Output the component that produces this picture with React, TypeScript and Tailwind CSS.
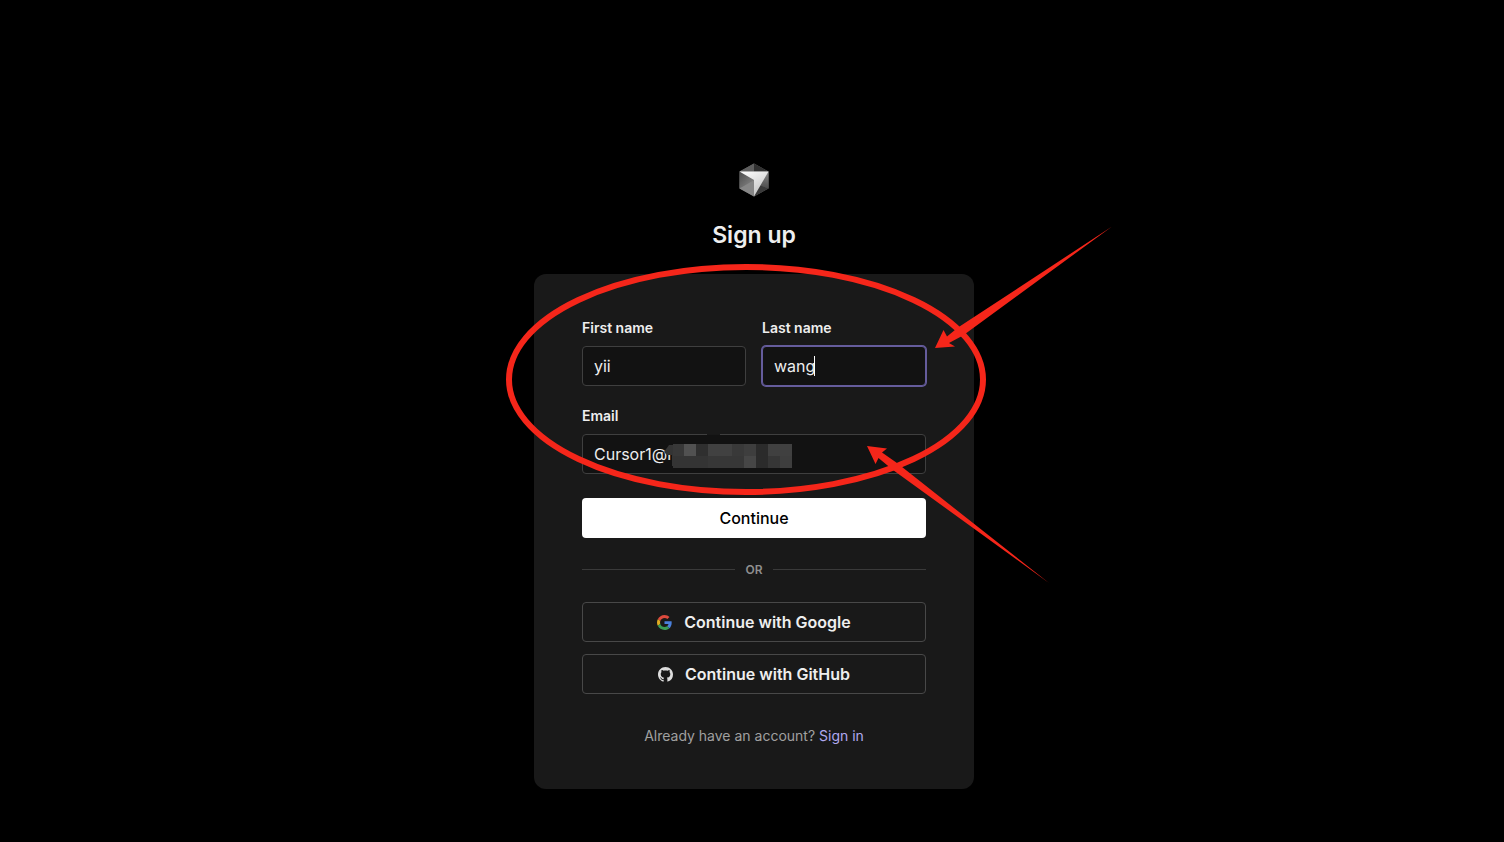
import React from "react";

const mosaic: [number, number, number, number, string][] = [
  [10, 0, 11, 12, "#383838"],
  [21, 0, 12, 12, "#515151"],
  [33, 0, 12, 12, "#2f2f2f"],
  [45, 0, 24, 12, "#414141"],
  [69, 0, 12, 12, "#393939"],
  [81, 0, 12, 12, "#3e3e3e"],
  [93, 0, 12, 12, "#2b2b2b"],
  [105, 0, 24, 12, "#404040"],
  [10, 12, 35, 12, "#343434"],
  [45, 12, 36, 12, "#373737"],
  [81, 12, 12, 12, "#464646"],
  [93, 12, 12, 12, "#2b2b2b"],
  [105, 12, 12, 12, "#363636"],
  [117, 12, 12, 12, "#3e3e3e"],
];

function Logo() {
  return (
    <svg viewBox="0 0 30 34" className="h-[34px] w-[30px]" role="img" aria-label="Cursor">
      <defs>
        <linearGradient id="face" x1="0" y1="0" x2="0.6" y2="1">
          <stop offset="0" stopColor="#ffffff" />
          <stop offset="1" stopColor="#c4c4c4" />
        </linearGradient>
        <linearGradient id="left" x1="0" y1="0" x2="1" y2="1">
          <stop offset="0" stopColor="#4c4c4c" />
          <stop offset="1" stopColor="#8c8c8c" />
        </linearGradient>
        <linearGradient id="right" x1="0" y1="0" x2="0" y2="1">
          <stop offset="0" stopColor="#8a8a8a" />
          <stop offset="1" stopColor="#4c4c4c" />
        </linearGradient>
      </defs>
      <path d="M15 0.5 29.5 8.5V25.5L15 33.5 0.5 25.5V8.5Z" fill="#6d6d6d" />
      <path d="M15 0.5 0.5 8.5H15Z" fill="#5e5e5e" />
      <path d="M15 0.5 29.5 8.5H15Z" fill="#303030" />
      <path d="M0.5 8.5V25.5L15 17Z" fill="url(#left)" />
      <path d="M0.5 25.5 15 17V33.5Z" fill="#878787" />
      <path d="M29.5 8.5V25.5L20 22Z" fill="url(#right)" />
      <path d="M29.5 25.5 15 33.5 20 22Z" fill="#3a3a3a" />
      <path d="M0.5 8.5H29.5L15 33.5V17Z" fill="url(#face)" />
    </svg>
  );
}

function GoogleIcon() {
  return (
    <svg viewBox="0 0 48 48" className="size-[15px]" aria-hidden="true">
      <path fill="#dc4a3d" d="M24 9.5c3.54 0 6.71 1.22 9.21 3.6l6.85-6.85C35.9 2.38 30.47 0 24 0 14.62 0 6.51 5.38 2.56 13.22l7.98 6.19C12.43 13.72 17.74 9.5 24 9.5z" />
      <path fill="#4a80dc" d="M46.98 24.55c0-1.57-.15-3.09-.38-4.55H24v9.02h12.94c-.58 2.96-2.26 5.48-4.78 7.18l7.73 6c4.51-4.18 7.09-10.36 7.09-17.65z" />
      <path fill="#e0ac20" d="M10.53 28.59c-.48-1.45-.76-2.99-.76-4.59s.27-3.14.76-4.59l-7.98-6.19C.92 16.46 0 20.12 0 24c0 3.88.92 7.54 2.56 10.78l7.97-6.19z" />
      <path fill="#3a9c55" d="M24 48c6.48 0 11.93-2.13 15.89-5.81l-7.73-6c-2.15 1.45-4.92 2.3-8.16 2.3-6.26 0-11.57-4.22-13.47-9.91l-7.98 6.19C6.51 42.62 14.62 48 24 48z" />
    </svg>
  );
}

function GitHubIcon() {
  return (
    <svg viewBox="0 0 16 16" className="size-[15px]" fill="#dddddd" aria-hidden="true">
      <path d="M8 0C3.58 0 0 3.58 0 8c0 3.54 2.29 6.53 5.47 7.59.4.07.55-.17.55-.38 0-.19-.01-.82-.01-1.49-2.01.37-2.53-.49-2.69-.94-.09-.23-.48-.94-.82-1.13-.28-.15-.68-.52-.01-.53.63-.01 1.08.58 1.23.82.72 1.21 1.87.87 2.33.66.07-.52.28-.87.51-1.07-1.78-.2-3.64-.89-3.64-3.95 0-.87.31-1.59.82-2.15-.08-.2-.36-1.02.08-2.12 0 0 .67-.21 2.2.82.64-.18 1.32-.27 2-.27s1.36.09 2 .27c1.53-1.04 2.2-.82 2.2-.82.44 1.1.16 1.92.08 2.12.51.56.82 1.27.82 2.15 0 3.07-1.87 3.75-3.65 3.95.29.25.54.73.54 1.48 0 1.07-.01 1.93-.01 2.2 0 .21.15.46.55.38A8.01 8.01 0 0 0 16 8c0-4.42-3.58-8-8-8Z" />
    </svg>
  );
}

function Annotations() {
  return (
    <svg
      viewBox="500 220 620 370"
      className="pointer-events-none absolute -left-[34px] -top-[54px] h-[370px] w-[620px] max-w-none"
      aria-hidden="true"
    >
      <ellipse cx="746" cy="379.5" rx="237" ry="112.5" fill="none" stroke="#f5261a" strokeWidth="6" />
      <path d="M935 348 943.5 330 947 336.5 958 327.5 1112 226.5 963 335.5 949 343 955 346.5Z" fill="#f5261a" />
      <path d="M867 446 887 448.5 882 452.5 897 463 1049 583 893 470 878.5 458 875.5 464Z" fill="#f5261a" />
    </svg>
  );
}

const field =
  "h-10 w-full rounded border border-[#3f3f3f] bg-[#121212] px-[11px] text-base text-[#eeeeee] outline-none";
const providerButton =
  "flex h-10 w-full items-center justify-center gap-3 rounded border border-[#484848] text-base font-semibold text-[#eeeeee]";
const label = "mb-2 block text-sm font-semibold text-[#eeeeee]";

export default function App() {
  return (
    <main className="flex min-h-screen flex-col items-center bg-black pb-13 pl-1 pt-[163px] font-['Inter',sans-serif]">
      <Logo />
      <h1 className="mt-[22px] text-[23px] leading-8 font-semibold text-[#eeeeee]">Sign up</h1>
      <section className="relative mt-[23px] w-full max-w-[440px] rounded-xl bg-[#191919] px-12 pb-[43px] pt-11">
        <form onSubmit={(e) => e.preventDefault()}>
          <div className="grid grid-cols-2 gap-4">
            <div>
              <label htmlFor="first" className={label}>First name</label>
              <input id="first" defaultValue="yii" className={field} />
            </div>
            <div>
              <label htmlFor="last" className={label}>Last name</label>
              <div className="relative">
                <input
                  id="last"
                  defaultValue="wang"
                  className="h-10 w-full rounded border border-[#655c9c] bg-[#121212] px-[11px] text-base text-[#eeeeee] outline-none ring-1 ring-[#655c9c]"
                />
                <span className="absolute left-[52px] top-[10px] h-5 w-px bg-white" />
              </div>
            </div>
          </div>
          <div className="mt-5">
            <label htmlFor="email" className={label}>Email</label>
            <div className="relative">
              <input id="email" defaultValue="Cursor1@r" className={field} />
              <svg
                viewBox="0 -10 130 34"
                className="absolute left-[81px] top-0 h-[34px] w-[130px]"
                aria-hidden="true"
              >
                <path d="M44 -10H57V-9H44Z" fill="#181818" />
                <path d="M1 8 6 1H10V22H9V11H4Z" fill="#343434" />
                {mosaic.map(([x, y, w, h, c]) => (
                  <rect key={`${x}-${y}`} x={x} y={y} width={w} height={h} fill={c} />
                ))}
              </svg>
            </div>
          </div>
          <button type="submit" className="mt-6 h-10 w-full rounded bg-white text-base font-medium text-black">
            Continue
          </button>
        </form>
        <div className="my-6 flex items-center gap-[10px] text-xs font-semibold text-[#8f8f8f]">
          <span className="mb-px h-px flex-1 bg-[#3a3a3a]" />
          OR
          <span className="mb-px h-px flex-1 bg-[#3a3a3a]" />
        </div>
        <div className="flex flex-col gap-3">
          <button type="button" className={providerButton}>
            <GoogleIcon />
            Continue with Google
          </button>
          <button type="button" className={providerButton}>
            <GitHubIcon />
            Continue with GitHub
          </button>
        </div>
        <p className="mt-8 text-center text-sm text-[#a0a0a0]">
          Already have an account?{" "}
          <a href="#sign-in" className="text-[#b1a9f0]">Sign in</a>
        </p>
        <Annotations />
      </section>
    </main>
  );
}
